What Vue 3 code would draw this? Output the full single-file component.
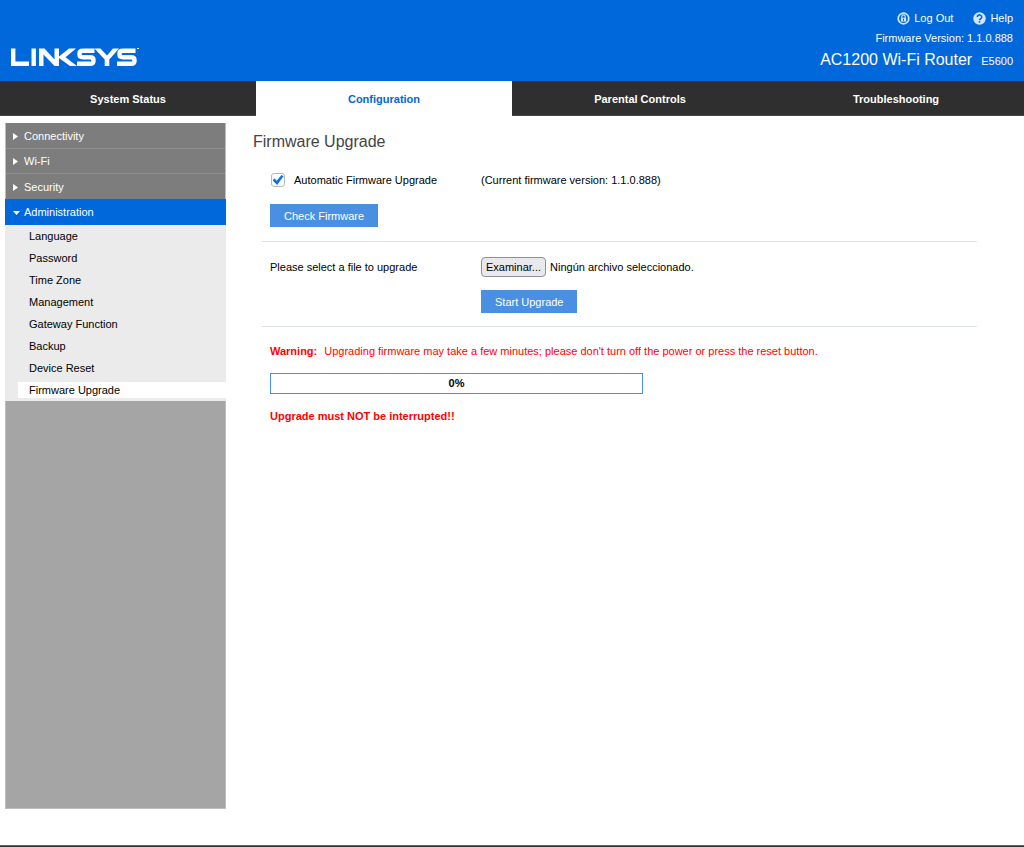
<script setup>
import { ref } from 'vue'

const tabs = ['System Status', 'Configuration', 'Parental Controls', 'Troubleshooting']
const activeTab = 'Configuration'
const sections = ['Connectivity', 'Wi-Fi', 'Security']
const pages = [
  'Language',
  'Password',
  'Time Zone',
  'Management',
  'Gateway Function',
  'Backup',
  'Device Reset',
  'Firmware Upgrade',
]
const activePage = 'Firmware Upgrade'
const automatic = ref(true)
const progress = ref(0)
const fileInput = ref(null)
const fileName = ref('Ningún archivo seleccionado.')

function browse() {
  fileInput.value.click()
}
function picked(event) {
  const file = event.target.files[0]
  if (file) fileName.value = file.name
}
</script>

<template>
  <div class="page">
    <header class="header">
      <svg class="logo" viewBox="0 0 128 19" role="img" aria-label="Linksys">
        <g fill="none" stroke="#fff" stroke-width="4.400">
          <path d="M2.200 0.500V15.800H18" />
          <path d="M22.700 0.500V18" />
          <path d="M83.500 2.700H72Q68.500 2.700 68.500 5.500V6.500Q68.500 9.200 72 9.200H79Q82.500 9.200 82.500 12V13Q82.500 15.800 79 15.800H66" />
          <path d="M124.500 2.700H112Q108.500 2.700 108.500 5.500V6.500Q108.500 9.200 112 9.200H120Q123.500 9.200 123.500 12V13Q123.500 15.800 120 15.800H106" />
        </g>
        <g fill="#fff">
          <path d="M28 0.500H33.500L43.500 11.500V0.500H48V8.500L58 0.500H65L54.500 9.200L66 18H59L48 10V18H43.500L32.500 6.500V18H28Z" />
          <path d="M83.500 0.500H89.500L96 7.500L102 0.500H108L98.300 11.500V18H93.700V11.500Z" />
          <path d="M126 0H128V1H126Z" />
        </g>
      </svg>
      <div class="info">
        <nav class="links" aria-label="Account">
          <a href="#logout">
            <svg class="icon" viewBox="0 0 13 13" aria-hidden="true">
              <circle cx="6.500" cy="6.500" r="5.300" fill="none" stroke="#d5e6fa" stroke-width="1.700" />
              <path d="M4.800 6V4.600a1.700 1.700 0 0 1 3.400 0V6" fill="none" stroke="#d5e6fa" stroke-width="1.100" />
              <path d="M3.900 5.700H9.100V9.600H3.900Z" fill="#d5e6fa" />
              <path d="M6.500 6.500V8.800" stroke="#0068da" stroke-width="1" />
            </svg>
            Log Out
          </a>
          <a href="#help">
            <svg class="icon" viewBox="0 0 13 13" aria-hidden="true">
              <circle cx="6.500" cy="6.500" r="6.200" fill="#d5e6fa" />
              <path d="M4.300 5.100a2.200 2.100 0 1 1 3.500 1.600Q6.500 7.300 6.500 8.300" fill="none" stroke="#0068da" stroke-width="1.600" />
              <path d="M5.700 9.200H7.300V10.700H5.700Z" fill="#0068da" />
            </svg>
            Help
          </a>
        </nav>
        <div class="version">Firmware Version: 1.1.0.888</div>
        <div class="model"><span class="product">AC1200 Wi-Fi Router</span><span>E5600</span></div>
      </div>
    </header>

    <nav class="tabs" aria-label="Main">
      <a v-for="tab in tabs" :key="tab" href="#" :class="{ active: tab === activeTab }">{{ tab }}</a>
    </nav>

    <div class="body">
      <nav class="sidebar" aria-label="Configuration">
        <a v-for="section in sections" :key="section" href="#" class="section">
          <svg class="arrow" viewBox="0 0 8 8" aria-hidden="true"><path d="M1 1L6 4.500L1 8Z" fill="#fff" /></svg>
          {{ section }}
        </a>
        <a href="#" class="section open">
          <svg class="arrow" viewBox="0 0 8 8" aria-hidden="true"><path d="M1 3H8L4.500 7Z" fill="#fff" /></svg>
          Administration
        </a>
        <div class="pages">
          <a v-for="page in pages" :key="page" href="#" :class="{ current: page === activePage }">{{ page }}</a>
        </div>
      </nav>

      <main class="content">
        <h1>Firmware Upgrade</h1>
        <section class="group">
          <div class="row">
            <div class="check">
              <input id="automatic" v-model="automatic" type="checkbox" />
              <label for="automatic">Automatic Firmware Upgrade</label>
            </div>
            <span>(Current firmware version: 1.1.0.888)</span>
          </div>
          <button type="button" class="action">Check Firmware</button>
        </section>
        <section class="group">
          <div class="row">
            <label for="firmware">Please select a file to upgrade</label>
            <div class="picker">
              <input id="firmware" ref="fileInput" class="file" type="file" tabindex="-1" @change="picked" />
              <button type="button" class="browse" @click="browse">Examinar...</button>
              <span>{{ fileName }}</span>
            </div>
          </div>
          <div class="row">
            <span></span>
            <div><button type="button" class="action">Start Upgrade</button></div>
          </div>
        </section>
        <section class="status">
          <p><strong>Warning:</strong>Upgrading firmware may take a few minutes; please don't turn off the power or press the reset button.</p>
          <div class="progress" role="progressbar" aria-label="Upgrade progress" :aria-valuenow="progress">{{ progress }}%</div>
          <p><b>Upgrade must NOT be interrupted!!</b></p>
        </section>
      </main>
    </div>
    <footer class="footer"></footer>
  </div>
</template>

<style>
body {
  margin: 0;
  background: #fff;
}
</style>

<style scoped>
* {
  box-sizing: border-box;
}
.page {
  display: flex;
  flex-direction: column;
  min-height: 100vh;
  font: 11px/16px "Liberation Sans", Arial, sans-serif;
  color: #000;
}
a {
  color: inherit;
  text-decoration: none;
}
button {
  font: inherit;
}
.header {
  display: flex;
  justify-content: space-between;
  align-items: flex-end;
  height: 81px;
  padding: 0 11px 10px;
  background: #0068da;
  color: #fff;
}
.logo {
  width: 128px;
  height: 19px;
  margin-bottom: 4px;
}
.info {
  display: flex;
  flex-direction: column;
  align-items: flex-end;
  gap: 4px;
}
.links {
  display: flex;
  gap: 20px;
}
.links a {
  display: flex;
  align-items: center;
  gap: 4px;
}
.icon {
  width: 13px;
  height: 13px;
}
.model {
  display: flex;
  align-items: baseline;
  gap: 9px;
  line-height: 20px;
}
.product {
  font-size: 16px;
}
.tabs {
  display: grid;
  grid-template-columns: repeat(4, 1fr);
  height: 35px;
  background: #2f2f2f;
  border-bottom: 1px solid #4a4647;
  color: #fff;
  font-weight: bold;
}
.tabs a {
  height: 35px;
  line-height: 36px;
  text-align: center;
}
.tabs .active {
  background: #fff;
  color: #0068da;
}
.body {
  flex: 1;
  display: flex;
  padding: 7px 47px 36px 5px;
}
.sidebar {
  width: 221px;
  flex-shrink: 0;
  background: #a5a5a5;
  border: 1px solid #bdbdbd;
  border-top: 0;
}
.section {
  display: flex;
  align-items: center;
  gap: 4px;
  height: 25px;
  padding-left: 6px;
  border-bottom: 1px solid #8f8f8f;
  background: #7d7d7d;
  color: #fff;
}
.section:first-child {
  height: 26px;
}
.section:nth-child(3) {
  border-bottom: 0;
}
.section.open {
  height: 26px;
  margin: 0 -1px;
  padding-left: 7px;
  border-bottom: 0;
  background: #0068da;
}
.arrow {
  width: 8px;
  height: 8px;
}
.pages {
  margin: 0 -1px;
  padding: 0 0 3px 13px;
  background: #ebebeb;
}
.pages a {
  display: block;
  height: 22px;
  padding-left: 11px;
  line-height: 22px;
}
.pages .current {
  height: 16px;
  margin-top: 3px;
  line-height: 16px;
  background: #fff;
}
.content {
  flex: 1;
  padding-left: 27px;
}
h1 {
  margin: 9px 0 0;
  color: #444;
  font-size: 16px;
  line-height: 20px;
  font-weight: normal;
}
.group {
  margin-left: 9px;
  padding-left: 8px;
  border-bottom: 1px solid #dce2e3;
}
.row {
  display: grid;
  grid-template-columns: 211px 1fr;
  align-items: center;
}
.group:nth-of-type(1) {
  padding-top: 20px;
  padding-bottom: 14px;
}
.group:nth-of-type(1) .row {
  margin-bottom: 16px;
}
.group:nth-of-type(2) {
  padding-top: 15px;
  padding-bottom: 13px;
}
.group:nth-of-type(2) .row + .row {
  margin-top: 13px;
}
.check {
  display: flex;
  align-items: center;
}
.check input {
  appearance: none;
  display: grid;
  place-content: center;
  width: 14px;
  height: 14px;
  margin: 0 9px 0 1px;
  border: 1px solid #b8b8b8;
  border-radius: 3px;
  background: #fff;
}
.check input:checked::before {
  content: "";
  width: 11px;
  height: 10px;
  background: #0873e8;
  clip-path: polygon(0 52%, 20% 36%, 38% 58%, 82% 0, 100% 12%, 42% 100%);
}
.action {
  display: block;
  height: 23px;
  padding: 1px 14px 0;
  border: 0;
  background: #4a90e2;
  color: #fff;
}
.picker {
  display: flex;
  align-items: center;
  gap: 4px;
}
.file {
  position: absolute;
  width: 1px;
  height: 1px;
  opacity: 0;
}
.browse {
  height: 20px;
  padding: 0 4px;
  border: 1px solid #8f8f9d;
  border-radius: 4px;
  background: #e9e9ed;
}
.status {
  padding: 16px 0 0 17px;
  color: #f00;
}
.status p {
  margin: 0;
}
strong {
  margin-right: 7px;
}
.progress {
  width: 373px;
  max-width: 100%;
  height: 21px;
  margin: 14px 0;
  border: 1px solid #4a90e2;
  color: #000;
  font-weight: bold;
  line-height: 18px;
  text-align: center;
}
.footer {
  height: 2px;
  border-top: 1px solid #666;
  background: #2f2f2f;
}
</style>
